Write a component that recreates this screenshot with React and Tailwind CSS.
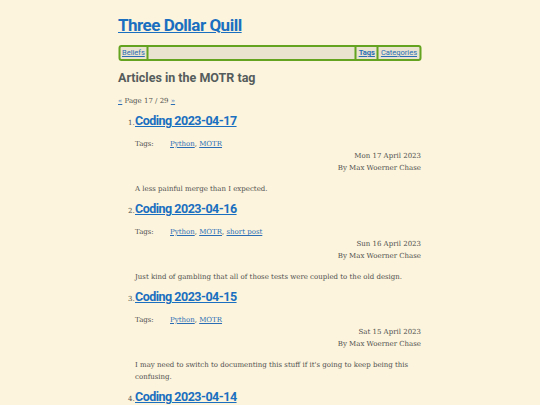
import React from "react";

const POSTS = [
  {
    title: "Coding 2023-04-17",
    tags: ["Python", "MOTR"],
    date: "Mon 17 April 2023",
    summary: "A less painful merge than I expected.",
  },
  {
    title: "Coding 2023-04-16",
    tags: ["Python", "MOTR", "short post"],
    date: "Sun 16 April 2023",
    summary: "Just kind of gambling that all of those tests were coupled to the old design.",
  },
  {
    title: "Coding 2023-04-15",
    tags: ["Python", "MOTR"],
    date: "Sat 15 April 2023",
    summary:
      "I may need to switch to documenting this stuff if it's going to keep being this confusing.",
  },
  {
    title: "Coding 2023-04-14",
    tags: ["Python", "MOTR"],
    date: "Fri 14 April 2023",
    summary: "",
  },
];

const sans = "font-['Roboto',sans-serif]";
const serif = "font-['DejaVu_Serif',serif]";

export default function App() {
  return (
    <div className="min-h-screen bg-[#fcf4dc] text-[#4f4f4f]">
      <div className="w-[303px] mx-auto pt-[14px] translate-x-[-0.5px]">
        <h1 className={`${sans} text-[17px] leading-[22px] font-bold tracking-[-0.5px]`}>
          <a href="#" className="text-[#1a6fc0] underline">Three Dollar Quill</a>
        </h1>

        <nav className={`${sans} mt-[9px] flex items-stretch h-[16px] rounded-[3px] border-2 border-[#63a31f] bg-[#e9e3cf] text-[7.5px] leading-[12px]`}>
          <a href="#" className="px-[2px] text-[#2a6db5] underline border-r-2 border-[#63a31f]">Beliefs</a>
          <div className="flex-1" />
          <a href="#" className="px-[2px] font-bold text-[#2a6db5] underline border-l-2 border-[#63a31f]">Tags</a>
          <a href="#" className="px-[2px] text-[#2a6db5] underline border-l-2 border-[#63a31f]">Categories</a>
        </nav>

        <h2 className={`${sans} mt-[8px] text-[12.5px] leading-[18px] font-bold text-[#555c5c]`}>
          Articles in the MOTR tag
        </h2>

        <p className={`${serif} mt-[8px] text-[7px] leading-[12px]`}>
          <a href="#" className="text-[#2a6db5] underline">«</a> Page 17 / 29{" "}
          <a href="#" className="text-[#2a6db5] underline">»</a>
        </p>

        <ol className="mt-[4px] pl-[17px]">
          {POSTS.map((p, i) => (
            <li key={p.title} className="mb-[4px]">
              <div className="flex items-baseline">
                <span className={`${serif} text-[7px] w-[7px] -ml-[7px]`}>{i + 1}.</span>
                <a href="#" className={`${sans} text-[12.5px] leading-[20px] font-bold tracking-[-0.5px] text-[#1a6fc0] underline`}>
                  {p.title}
                </a>
              </div>
              <div className={`${serif} text-[7px] leading-[12px]`}>
                <div className="mt-[7px] flex">
                  <span className="w-[35px]">Tags:</span>
                  <span>
                    {p.tags.map((t, j) => (
                      <span key={t}>
                        <a href="#" className="text-[#2a6db5] underline">{t}</a>
                        {j < p.tags.length - 1 ? ", " : ""}
                      </span>
                    ))}
                  </span>
                </div>
                <div className="text-right">{p.date}</div>
                <div className="text-right">By Max Woerner Chase</div>
                <p className="mt-[9px] pr-[10px]">{p.summary}</p>
              </div>
            </li>
          ))}
        </ol>
      </div>
    </div>
  );
}
